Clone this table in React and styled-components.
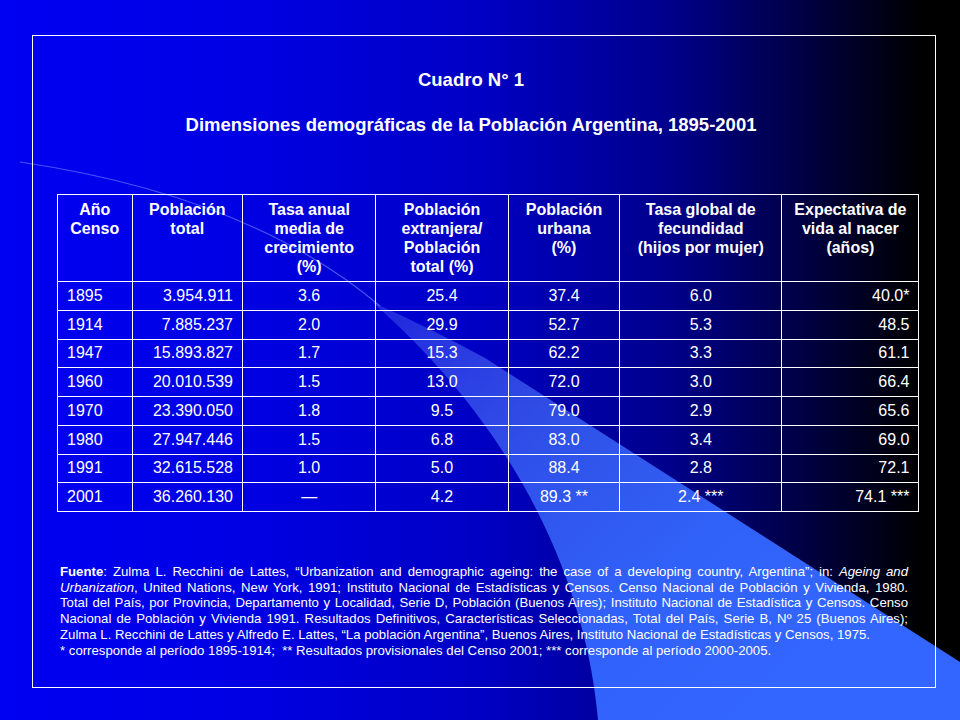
import React from 'react';
import styled, { createGlobalStyle } from 'styled-components';

const GlobalStyle = createGlobalStyle`
  html, body {
    margin: 0;
    padding: 0;
    background: #000;
  }
  body {
    font-family: "Liberation Sans", Arial, sans-serif;
  }
`;

const Slide = styled.div`
  position: relative;
  width: 960px;
  height: 720px;
  overflow: hidden;
  box-sizing: border-box;
  padding: 35px 24px 32px 32px;
  color: #fff;
  background: linear-gradient(
    to right,
    #0000f2 0%,
    #0000e4 25%,
    #0000c4 50%,
    #00008a 70%,
    #00003c 85%,
    #000000 96%
  );
`;

const Swoosh = styled.svg`
  position: absolute;
  left: 0;
  top: 0;
  width: 960px;
  height: 720px;
  pointer-events: none;
`;

const Frame = styled.div`
  position: relative;
  z-index: 1;
  height: 100%;
  box-sizing: border-box;
  border: 1px solid #fff;
  padding: 33px 27px 0 24px;
  display: flex;
  flex-direction: column;
`;

const Title = styled.div`
  margin-right: 23px;
  text-align: center;
  font-weight: bold;
  font-size: 18.5px;
  line-height: 22px;
`;

const TitleLine = styled.div`
  & + & {
    margin-top: 23px;
  }
`;

const Grid = styled.div`
  margin-top: 58px;
  display: grid;
  grid-template-columns: 74.5px 110.5px 133.3px 132.4px 111.6px 162px 137.2px;
  grid-template-rows: 87px repeat(8, 28.75px);
  width: max-content;
  border-top: 1px solid #fff;
  border-left: 1px solid #fff;
`;

const HeadCell = styled.div`
  box-sizing: border-box;
  border-right: 1px solid #fff;
  border-bottom: 1px solid #fff;
  padding: 5px 4px 0;
  text-align: center;
  font-weight: bold;
  font-size: 16px;
  line-height: 19px;
`;

const Cell = styled.div`
  box-sizing: border-box;
  border-right: 1px solid #fff;
  border-bottom: 1px solid #fff;
  padding-left: ${(p) => (p.$align === 'right' ? '4px' : '9px')};
  padding-right: ${(p) => (p.$align === 'left' ? '4px' : '9px')};
  display: flex;
  align-items: center;
  justify-content: ${(p) =>
    p.$align === 'left' ? 'flex-start' : p.$align === 'right' ? 'flex-end' : 'center'};
  font-size: 16px;
  white-space: nowrap;
`;

const Note = styled.div`
  margin: 52px 0 0 3px;
  width: 848px;
  font-size: 13.2px;
  line-height: 15.7px;
`;

const NoteLine = styled.div`
  white-space: nowrap;
  text-align: left;
  ${(p) => p.$justify && 'text-align-last: justify; white-space: normal;'}
`;

const headers = [
  ['Año', 'Censo'],
  ['Población', 'total'],
  ['Tasa anual', 'media de', 'crecimiento', '(%)'],
  ['Población', 'extranjera/', 'Población', 'total (%)'],
  ['Población', 'urbana', '(%)'],
  ['Tasa global de', 'fecundidad', '(hijos por mujer)'],
  ['Expectativa de', 'vida al nacer', '(años)'],
];

const aligns = ['left', 'right', 'center', 'center', 'center', 'center', 'right'];

const rows = [
  ['1895', '3.954.911', '3.6', '25.4', '37.4', '6.0', '40.0*'],
  ['1914', '7.885.237', '2.0', '29.9', '52.7', '5.3', '48.5'],
  ['1947', '15.893.827', '1.7', '15.3', '62.2', '3.3', '61.1'],
  ['1960', '20.010.539', '1.5', '13.0', '72.0', '3.0', '66.4'],
  ['1970', '23.390.050', '1.8', '9.5', '79.0', '2.9', '65.6'],
  ['1980', '27.947.446', '1.5', '6.8', '83.0', '3.4', '69.0'],
  ['1991', '32.615.528', '1.0', '5.0', '88.4', '2.8', '72.1'],
  ['2001', '36.260.130', '—', '4.2', '89.3 **', '2.4 ***', '74.1 ***'],
];

export default function App() {
  return (
    <>
      <GlobalStyle />
      <Slide>
        <Swoosh viewBox="0 0 960 720">
          <defs>
            <linearGradient id="sw" x1="390" y1="310" x2="760" y2="700" gradientUnits="userSpaceOnUse">
              <stop offset="0" stopColor="#6a88ff" stopOpacity="0.3" />
              <stop offset="0.4" stopColor="#3f6dff" stopOpacity="0.75" />
              <stop offset="0.7" stopColor="#3366ff" stopOpacity="0.95" />
              <stop offset="1" stopColor="#3366ff" stopOpacity="1" />
            </linearGradient>
          </defs>
          <path d="M 20 162 Q 250 196 380 306" stroke="#7090ff" strokeOpacity="0.6" strokeWidth="1.2" fill="none" />
          <path
            d="M 372 302 Q 430 328 485 358 L 960 662 L 960 720 L 598 720 C 588 600, 530 440, 372 302 Z"
            fill="url(#sw)"
          />
        </Swoosh>
        <Frame>
          <Title>
            <TitleLine>Cuadro N° 1</TitleLine>
            <TitleLine>Dimensiones demográficas de la Población Argentina, 1895-2001</TitleLine>
          </Title>
          <Grid>
            {headers.map((lines, i) => (
              <HeadCell key={'h' + i}>
                {lines.map((l, j) => (
                  <div key={j}>{l}</div>
                ))}
              </HeadCell>
            ))}
            {rows.map((row, r) =>
              row.map((v, c) => (
                <Cell key={r + '-' + c} $align={aligns[c]}>
                  {v}
                </Cell>
              ))
            )}
          </Grid>
          <Note>
            <NoteLine $justify>
              <b>Fuente</b>: Zulma L. Recchini de Lattes, “Urbanization and demographic ageing: the case of a developing country, Argentina”; in: <i>Ageing and</i>
            </NoteLine>
            <NoteLine $justify>
              <i>Urbanization</i>, United Nations, New York, 1991; Instituto Nacional de Estadísticas y Censos. Censo Nacional de Población y Vivienda, 1980.
            </NoteLine>
            <NoteLine $justify>
              Total del País, por Provincia, Departamento y Localidad, Serie D, Población (Buenos Aires); Instituto Nacional de Estadística y Censos. Censo
            </NoteLine>
            <NoteLine $justify>
              Nacional de Población y Vivienda 1991. Resultados Definitivos, Características Seleccionadas, Total del País, Serie B, Nº 25 (Buenos Aires);
            </NoteLine>
            <NoteLine>
              Zulma L. Recchini de Lattes y Alfredo E. Lattes, “La población Argentina”, Buenos Aires, Instituto Nacional de Estadísticas y Censos, 1975.
            </NoteLine>
            <NoteLine>
              * corresponde al período 1895-1914;&nbsp; ** Resultados provisionales del Censo 2001; *** corresponde al período 2000-2005.
            </NoteLine>
          </Note>
        </Frame>
      </Slide>
    </>
  );
}
